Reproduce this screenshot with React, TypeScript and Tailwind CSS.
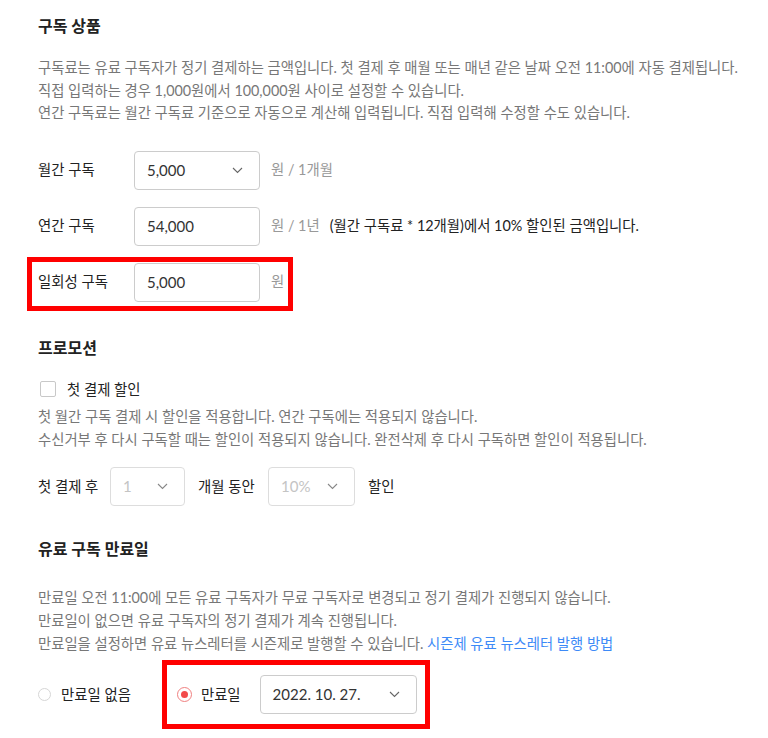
import React from 'react';

const font = { fontFamily: 'Lato, "Noto Sans CJK KR", sans-serif' };

const Chevron: React.FC<{ light?: boolean }> = ({ light }) => (
  <svg width="11" height="7" viewBox="0 0 11 7" fill="none">
    <polyline points="1,1 5.5,5.5 10,1" stroke={light ? '#888' : '#666'} strokeWidth="1.1" />
  </svg>
);

const Box: React.FC<{ value: string; w: string; select?: boolean; disabled?: boolean }> = ({ value, w, select, disabled }) => (
  <div
    className={`${w} h-[39px] flex items-center justify-between px-[12px] rounded-[4px] border ${
      disabled ? 'border-[#dddddd] text-[#c4c4c4]' : 'border-[#cccccc] text-[#333333]'
    } text-[15px] bg-white`}
  >
    <span>{value}</span>
    {select && (
      <span className="mr-[4px]">
        <Chevron light={disabled} />
      </span>
    )}
  </div>
);

const Heading: React.FC<{ children: React.ReactNode }> = ({ children }) => (
  <h2 className="text-[16px] font-bold text-[#222222] leading-[24px]">{children}</h2>
);

export default function App() {
  return (
    <div style={font} className="bg-white w-[768px] h-[738px] overflow-hidden pl-[38px] pt-[14px]">
      {/* 구독 상품 */}
      <Heading>구독 상품</Heading>
      <div className="mt-[19px] text-[14.35px] leading-[22.5px] text-[#777777]">
        <p>구독료는 유료 구독자가 정기 결제하는 금액입니다. 첫 결제 후 매월 또는 매년 같은 날짜 오전 11:00에 자동 결제됩니다.</p>
        <p>직접 입력하는 경우 1,000원에서 100,000원 사이로 설정할 수 있습니다.</p>
        <p>연간 구독료는 월간 구독료 기준으로 자동으로 계산해 입력됩니다. 직접 입력해 수정할 수도 있습니다.</p>
      </div>

      <div className="mt-[26px] flex flex-col gap-[17px] text-[14.4px]">
        <div className="flex items-center">
          <span className="w-[96px] text-[#222222]">월간 구독</span>
          <Box value="5,000" w="w-[126px]" select />
          <span className="ml-[11px] text-[#999999]">원 / 1개월</span>
        </div>
        <div className="flex items-center">
          <span className="w-[96px] text-[#222222]">연간 구독</span>
          <Box value="54,000" w="w-[126px]" />
          <span className="ml-[11px] text-[#999999]">원 / 1년</span>
          <span className="ml-[10px] text-[#222222]">(월간 구독료 * 12개월)에서 10% 할인된 금액입니다.</span>
        </div>
        <div className="relative flex items-center">
          <span className="w-[96px] text-[#222222]">일회성 구독</span>
          <Box value="5,000" w="w-[126px]" />
          <span className="ml-[11px] text-[#999999]">원</span>
          <div className="pointer-events-none absolute left-[-11px] top-[-6px] w-[266px] h-[54px] border-[5px] border-[#ff0000]" />
        </div>
      </div>

      {/* 프로모션 */}
      <div className="mt-[34px]">
        <Heading>프로모션</Heading>
      </div>
      <div className="mt-[19px] flex items-center text-[14.4px]">
        <span className="ml-[2px] w-[16px] h-[16px] border border-[#c8c8c8] rounded-[2px] bg-white" />
        <span className="ml-[11px] text-[#222222]">첫 결제 할인</span>
      </div>
      <div className="mt-[5px] text-[14.35px] leading-[23px] text-[#777777]">
        <p>첫 월간 구독 결제 시 할인을 적용합니다. 연간 구독에는 적용되지 않습니다.</p>
        <p>수신거부 후 다시 구독할 때는 할인이 적용되지 않습니다. 완전삭제 후 다시 구독하면 할인이 적용됩니다.</p>
      </div>
      <div className="mt-[16px] flex items-center text-[14.4px] text-[#222222]">
        <span className="w-[72px]">첫 결제 후</span>
        <Box value="1" w="w-[75px]" select disabled />
        <span className="ml-[13px] w-[70px]">개월 동안</span>
        <Box value="10%" w="w-[87px]" select disabled />
        <span className="ml-[13px]">할인</span>
      </div>

      {/* 유료 구독 만료일 */}
      <div className="mt-[31px]">
        <Heading>유료 구독 만료일</Heading>
      </div>
      <div className="mt-[25px] text-[14.35px] leading-[23px] text-[#777777]">
        <p>만료일 오전 11:00에 모든 유료 구독자가 무료 구독자로 변경되고 정기 결제가 진행되지 않습니다.</p>
        <p>만료일이 없으면 유료 구독자의 정기 결제가 계속 진행됩니다.</p>
        <p>
          만료일을 설정하면 유료 뉴스레터를 시즌제로 발행할 수 있습니다.{' '}
          <span className="text-[#3d8af7]">시즌제 유료 뉴스레터 발행 방법</span>
        </p>
      </div>
      <div className="mt-[20px] flex items-center text-[14.4px] text-[#222222]">
        <span className="w-[13px] h-[13px] rounded-full border border-[#d6d6d6] bg-white" />
        <span className="ml-[10px]">만료일 없음</span>
        <div className="relative ml-[46px] flex items-center">
          <span className="w-[15px] h-[15px] rounded-full border border-[#f08080] bg-white flex items-center justify-center">
            <span className="w-[7px] h-[7px] rounded-full bg-[#f24b4b]" />
          </span>
          <span className="ml-[9px]">만료일</span>
          <div className="ml-[19px]">
            <Box value="2022. 10. 27." w="w-[157px]" select />
          </div>
          <div className="pointer-events-none absolute left-[-15px] top-[-15px] w-[268px] h-[69px] border-[5px] border-[#ff0000]" />
        </div>
      </div>
    </div>
  );
}
